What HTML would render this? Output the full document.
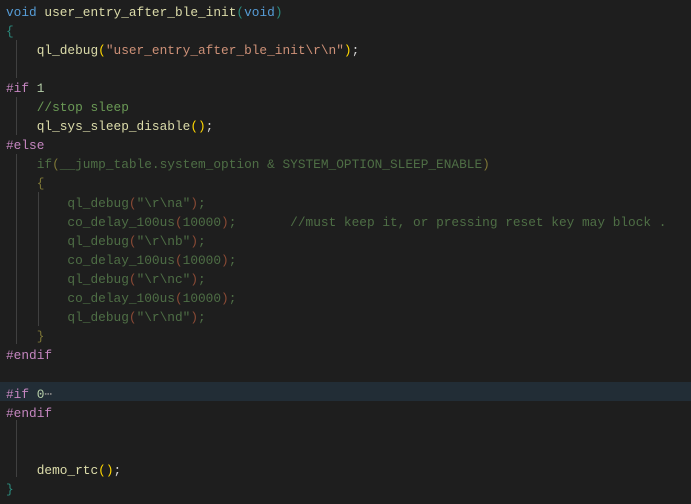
<!DOCTYPE html>
<html><head><style>
body{margin:0;background:#1e1e1e;width:691px;height:504px;overflow:hidden;position:relative;font-family:"Liberation Mono",monospace;font-size:12.8px;}
.l{position:absolute;left:6px;height:19.1px;line-height:19.1px;white-space:pre;color:#d4d4d4;}
.k{color:#569cd6}.f{color:#dcdcaa}.t{color:#2b8a7c}.y{color:#ffd700}.s{color:#ce9178}.p{color:#c586c0}.n{color:#b5cea8}.c{color:#6a9955}
.i{color:#4e6e45}.iy{color:#7d7636}.ir{color:#8a4a35}
.g{position:absolute;width:1px;background:#404040}
.hl{position:absolute;left:0;width:691px;top:382px;height:19px;background:#222d36}
</style></head><body>
<div class="hl"></div>
<div class="g" style="left:16px;top:40px;height:38px"></div>
<div class="g" style="left:16px;top:97px;height:38px"></div>
<div class="g" style="left:16px;top:154px;height:190px"></div>
<div class="g" style="left:38px;top:192px;height:134px"></div>
<div class="g" style="left:16px;top:420px;height:57px"></div>
<div class="l" style="top:2.5px"><span class="k">void</span> <span class="f">user_entry_after_ble_init</span><span class="t">(</span><span class="k">void</span><span class="t">)</span></div>
<div class="l" style="top:21.6px"><span class="t">{</span></div>
<div class="l" style="top:40.7px">    <span class="f">ql_debug</span><span class="y">(</span><span class="s">"user_entry_after_ble_init\r\n"</span><span class="y">)</span>;</div>
<div class="l" style="top:78.9px"><span class="p">#if</span> <span class="n">1</span></div>
<div class="l" style="top:98px">    <span class="c">//stop sleep</span></div>
<div class="l" style="top:117.1px">    <span class="f">ql_sys_sleep_disable</span><span class="y">()</span>;</div>
<div class="l" style="top:136.2px"><span class="p">#else</span></div>
<div class="l i" style="top:155.3px">    if<span class="iy">(</span>__jump_table.system_option &amp; SYSTEM_OPTION_SLEEP_ENABLE<span class="iy">)</span></div>
<div class="l i" style="top:174.4px">    <span class="iy">{</span></div>
<div class="l i" style="top:193.5px">        ql_debug<span class="ir">(</span>"\r\na"<span class="ir">)</span>;</div>
<div class="l i" style="top:212.6px">        co_delay_100us<span class="ir">(</span>10000<span class="ir">)</span>;       //must keep it, or pressing reset key may block .</div>
<div class="l i" style="top:231.7px">        ql_debug<span class="ir">(</span>"\r\nb"<span class="ir">)</span>;</div>
<div class="l i" style="top:250.8px">        co_delay_100us<span class="ir">(</span>10000<span class="ir">)</span>;</div>
<div class="l i" style="top:269.9px">        ql_debug<span class="ir">(</span>"\r\nc"<span class="ir">)</span>;</div>
<div class="l i" style="top:289px">        co_delay_100us<span class="ir">(</span>10000<span class="ir">)</span>;</div>
<div class="l i" style="top:308.1px">        ql_debug<span class="ir">(</span>"\r\nd"<span class="ir">)</span>;</div>
<div class="l i" style="top:327.2px">    <span class="iy">}</span></div>
<div class="l" style="top:346.3px"><span class="p">#endif</span></div>
<div class="l" style="top:384.5px"><span class="p">#if</span> <span class="n">0</span><span style="color:#808080">⋯</span></div>
<div class="l" style="top:403.6px"><span class="p">#endif</span></div>
<div class="l" style="top:460.9px">    <span class="f">demo_rtc</span><span class="y">()</span>;</div>
<div class="l" style="top:480px"><span class="t">}</span></div>
</body></html>
